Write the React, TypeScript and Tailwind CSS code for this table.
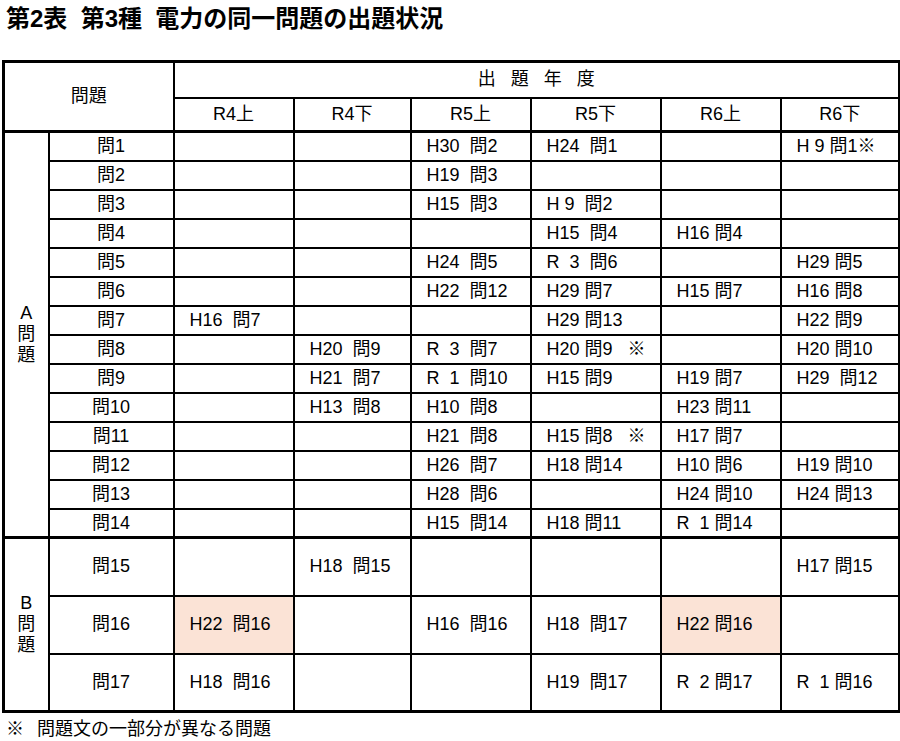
import React from 'react';

const years = ['R4上', 'R4下', 'R5上', 'R5下', 'R6上', 'R6下'];

// 各行: [問題番号, R4上, R4下, R5上, R5下, R6上, R6下]
const rowsA: string[][] = [
  ['問1', '', '', 'H30  問2', 'H24  問1', '', 'H 9 問1※'],
  ['問2', '', '', 'H19  問3', '', '', ''],
  ['問3', '', '', 'H15  問3', 'H 9  問2', '', ''],
  ['問4', '', '', '', 'H15  問4', 'H16 問4', ''],
  ['問5', '', '', 'H24  問5', 'R  3  問6', '', 'H29 問5'],
  ['問6', '', '', 'H22  問12', 'H29 問7', 'H15 問7', 'H16 問8'],
  ['問7', 'H16  問7', '', '', 'H29 問13', '', 'H22 問9'],
  ['問8', '', 'H20  問9', 'R  3  問7', 'H20 問9   ※', '', 'H20 問10'],
  ['問9', '', 'H21  問7', 'R  1  問10', 'H15 問9', 'H19 問7', 'H29  問12'],
  ['問10', '', 'H13  問8', 'H10  問8', '', 'H23 問11', ''],
  ['問11', '', '', 'H21  問8', 'H15 問8   ※', 'H17 問7', ''],
  ['問12', '', '', 'H26  問7', 'H18 問14', 'H10 問6', 'H19 問10'],
  ['問13', '', '', 'H28  問6', '', 'H24 問10', 'H24 問13'],
  ['問14', '', '', 'H15  問14', 'H18 問11', 'R  1 問14', ''],
];

const rowsB: string[][] = [
  ['問15', '', 'H18  問15', '', '', '', 'H17 問15'],
  ['問16', 'H22  問16', '', 'H16  問16', 'H18  問17', 'H22 問16', ''],
  ['問17', 'H18  問16', '', '', 'H19  問17', 'R  2 問17', 'R  1 問16'],
];

// 色付きセル (行ラベル-列番号)
const highlight = new Set(['問16-1', '問16-5']);

function DataCells({ row, last }: { row: string[]; last?: boolean }) {
  return (
    <>
      <td className={`border-2 border-black text-center ${last ? 'border-b-[3px]' : ''}`}>{row[0]}</td>
      {row.slice(1).map((v, i) => (
        <td
          key={i}
          className={`border-2 border-black pl-[15px] text-left whitespace-pre ${
            highlight.has(`${row[0]}-${i + 1}`) ? 'bg-[#fbe3d6]' : ''
          } ${last ? 'border-b-[3px]' : ''} ${i === 5 ? 'border-r-[3px]' : ''}`}
        >
          {v}
        </td>
      ))}
    </>
  );
}

export default function App() {
  return (
    <div
      className="w-[900px] h-[741px] bg-white text-black overflow-hidden"
      style={{ fontFamily: '"Liberation Sans", "Noto Sans CJK JP", sans-serif' }}
    >
      <h1 className="pl-[6px] pt-[4px] h-[60px] text-[24px] leading-[30px] font-bold whitespace-pre">
        第2表  第3種  電力の同一問題の出題状況
      </h1>

      <table className="ml-[2px] w-[896px] table-fixed border-collapse border-[3px] border-black text-[18px]">
        <colgroup>
          <col className="w-[45px]" />
          <col className="w-[125px]" />
          <col className="w-[120px]" />
          <col className="w-[117px]" />
          <col className="w-[120px]" />
          <col className="w-[130px]" />
          <col className="w-[120px]" />
          <col className="w-[119px]" />
        </colgroup>
        <thead>
          <tr className="h-[36px]">
            <th
              rowSpan={2}
              colSpan={2}
              className="border-2 border-t-[3px] border-l-[3px] border-b-[3px] border-black font-normal"
            >
              問題
            </th>
            <th colSpan={6} className="border-2 border-t-[3px] border-r-[3px] border-black font-normal whitespace-pre">
              出   題   年   度
            </th>
          </tr>
          <tr className="h-[34px]">
            {years.map((y, i) => (
              <th
                key={y}
                className={`border-2 border-b-[3px] border-black font-normal ${i === 5 ? 'border-r-[3px]' : ''}`}
              >
                {y}
              </th>
            ))}
          </tr>
        </thead>
        <tbody>
          {rowsA.map((row, r) => (
            <tr key={row[0]} className="h-[29px] leading-[24px]">
              {r === 0 && (
                <td rowSpan={14} className="border-2 border-l-[3px] border-b-[3px] border-black text-center leading-[21px]">
                  A<br />問<br />題
                </td>
              )}
              <DataCells row={row} last={r === rowsA.length - 1} />
            </tr>
          ))}
          {rowsB.map((row, r) => (
            <tr key={row[0]} className="h-[58px]">
              {r === 0 && (
                <td rowSpan={3} className="border-2 border-l-[3px] border-b-[3px] border-black text-center leading-[21px]">
                  B<br />問<br />題
                </td>
              )}
              <DataCells row={row} last={r === rowsB.length - 1} />
            </tr>
          ))}
        </tbody>
      </table>

      <p className="pl-[6px] pt-[4px] text-[18px] leading-[24px]">
        <span className="mr-[13px]">※</span>問題文の一部分が異なる問題
      </p>
    </div>
  );
}
